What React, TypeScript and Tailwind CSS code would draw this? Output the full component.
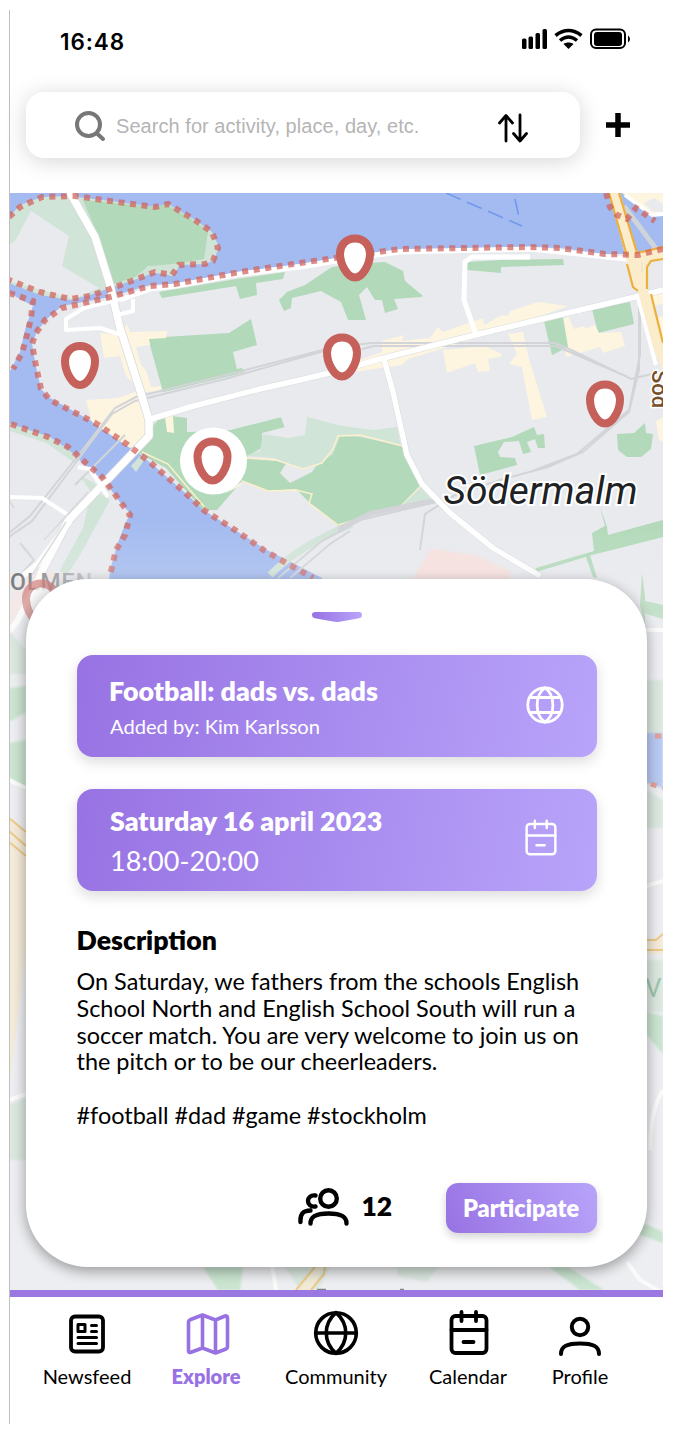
import type { ReactNode } from "react";

const PIN = "M0-19.5C9.2-19.5 15-12.5 15-4.5C15 6.5 7.6 19.5 0 19.5C-7.6 19.5-15 6.5-15-4.5C-15-12.5-9.2-19.5 0-19.5Z";

function Pin({ x, y, opacity = 1 }: { x: number; y: number; opacity?: number }) {
  return (
    <path
      d={PIN}
      transform={`translate(${x} ${y})`}
      fill="#fff"
      stroke="#c5605b"
      strokeWidth="8"
      opacity={opacity}
    />
  );
}

function CityMap() {
  return (
    <svg className="absolute inset-0 h-full w-full" viewBox="10 193 653 1097" preserveAspectRatio="none">
      <defs>
        <linearGradient id="haze" gradientUnits="userSpaceOnUse" x1="0" y1="520" x2="0" y2="650">
          <stop offset="0" stopColor="#f2f2f4" stopOpacity="0" />
          <stop offset="0.45" stopColor="#f2f2f4" stopOpacity="0.2" />
          <stop offset="1" stopColor="#f4f4f5" stopOpacity="0.42" />
        </linearGradient>
        <linearGradient id="labelFade" gradientUnits="userSpaceOnUse" x1="10" y1="0" x2="92" y2="0">
          <stop offset="0" stopColor="#55565a" />
          <stop offset="0.3" stopColor="#77787c" />
          <stop offset="1" stopColor="#c9cace" />
        </linearGradient>
        <filter id="soft"><feGaussianBlur stdDeviation="7" /></filter>
        <filter id="mist"><feGaussianBlur stdDeviation="1.2" /></filter>
      </defs>
      <rect x="9" y="193" width="654" height="1097" fill="#e8eaee" />

      {/* water */}
      <path
        fill="#a3bbf0"
        d="M9 193H663V249L638 254L605 254L560 248L530 247L400 249L355 255L300 264L240 272L172 284L150 285L110 297L62 306L48 318L38 330L32 343L35 362L41 389L50 398L97 424L128 445L152 464L182 490L205 511L235 530L265 549L322 578V640H104L110 570L117 545L122 532L130 513L122 505L105 482L85 465L65 447L45 437L9 424V373L20 352L25 330L33 306L9 293Z"
      />
      {/* north-west island */}
      <path fill="#d1e4d8" d="M9 217L20 205L42 197L68 196L85 198L110 201L155 207L168 204L195 220L212 232L219 247L214 260L205 264L180 265L172 276L155 272L140 278L110 288L90 295L70 300L40 295L9 283Z" />
      <path fill="#e8eaee" d="M9 245L15 241L31 211L69 236L62 266L99 288L74 299L9 281Z" />
      <path fill="#b2d9b9" d="M83 200L155 207L166 204L190 218L208 231L204 259L180 263L147 267L135 277L114 284L96 231Z" />
      <path fill="#d1e4d8" d="M147 266L180 265L174 274L146 273Z" />

      {/* parks */}
      <g fill="#b2d9b9">
        <path d="M159 292L236 279L285 272L283 279L256 283L257 295L240 299L236 286L162 298Z" />
        <path d="M148 338L229 333L251 319L257 345L233 352L238 374L163 392Z" />
        <path d="M279 300L287 292L305 285L332 267L355 264L385 262L403 271L405 281L423 296L421 297L394 299L398 309L385 313L382 300L375 300L367 287L359 295L366 320L348 320L341 302L321 291L292 298L291 308L284 311Z" />
        <path d="M467 262L500 260L563 259L564 265L501 267L501 273L467 270Z" />
        <path d="M592 309L630 302L634 324L598 333Z" />
        <path d="M474 446L512 437L534 427L537 435L544 434L545 448L538 448L535 439L527 442L531 452L523 454L519 441L504 442L498 452L500 457L515 458L517 465L480 475Z" />
        <path d="M617 434L634 433L645 423L646 433L653 434L651 449L641 457L627 457L618 450Z" />
        <path d="M592 533L605 526L600 507L607 527L608 535L663 520V537L612 550L592 555L533 573L536 568L594 551Z" />
        <path d="M590 555L597 578L593 577L586 557Z" />
        <path d="M642 573L645 596L645 625L640 605Z" />
        <path d="M641 600L663 605V619L646 614Z" />
        <path d="M145 435L158 420L172 416L187 418V432L230 430L281 417L285 427L262 433L263 447L245 458L287 462L280 473L290 483L312 472L338 435L374 437L405 446L420 486L400 507L338 526L311 504L296 489L268 491L242 481L217 510L203 510L166 468L138 453Z" />
        <path d="M162 385L242 368L245 372L163 392Z" />
      </g>
      <path fill="#e8eaee" d="M188 416L285 404L308 418L340 435L320 450L288 442L264 447L262 434L285 428L281 417L230 430L187 432Z" />
      <path fill="#d1e4d8" d="M263 434L288 438L305 435L307 417L342 426L374 430L397 427L401 446L360 437L340 436L333 454L318 465L303 470L274 458L245 456L260 451Z" />
      <path fill="#fdf5df" d="M165 417L173 416L174 433L167 432ZM225 494L240 483L268 492L243 484Z" />
      <path fill="none" stroke="#fdf0cc" strokeWidth="1.5" d="M245 458L276 460L303 469L322 463L333 449L338 436L360 435L403 446M420 487L400 507L338 525L309 503L312 494L296 490L268 491L242 481M142 452L168 464L184 483L207 510" />
      <path fill="#d1e4d8" d="M400 507L421 487L435 504Z M131 466L140 456L145 459L136 472Z M80 476L95 483L98 492L110 500L80 555L65 578L60 570L83 528L91 492Z" />
      <path fill="none" stroke="#d1e4d8" strokeWidth="7" d="M270 575Q300 545 352 524M9 427L48 440L78 461" />
      <path fill="#fbded9" filter="url(#mist)" d="M431 549L475 555L510 571V580H412Z" opacity=".8" />
      <path fill="#f6e3df" d="M9 600L34 562L56 574L30 604L9 640Z" opacity=".75" />

      {/* shopping blocks */}
      <g fill="#fdf5df">
        <path d="M100 333L120 335L127 324L130 332L167 331L166 338L149 339L150 345L136 347L141 365L146 370L151 387L161 386L160 391L142 392L126 376L120 356L104 358Z" />
        <path d="M86 400L118 398L140 390L147 420L150 438L130 448L92 422Z" />
        <path d="M382 341L404 335L402 341L430 338L438 327L443 332L483 318L484 325L502 315L508 316L510 311L538 302L568 306L500 331L408 359L402 365L354 372L360 360L382 352Z" />
        <path d="M443 350L485 346L502 354L500 357L488 359L490 371L478 372L475 363L447 373Z" />
        <path d="M508 334L523 332L529 359L547 417L532 420L522 367L509 364L517 354Z" />
        <path d="M562 319L580 312L585 329L595 325L599 333L621 332L625 346L603 353L600 347L566 357Z" />
        <path d="M622 193H663V214L650 214L636 205Z" />
        <path d="M650 296L663 290V304L652 306ZM656 318L663 316V350L657 345ZM656 421L663 417V442L659 440Z" />
      </g>
      <path fill="#e8eaee" d="M568 316L578 312L587 325L574 329ZM644 203L654 198L663 204V212L652 211Z" />
      <path fill="#b2d9b9" d="M544 321L563 317L568 347L552 355Z" />

      {/* railway lines */}
      <g fill="none" stroke="#d2d4d8" strokeWidth="2">
        <path d="M9 537L32 521L74 465L112 414L135 401L225 379L342 346L372 343L555 343L567 348L631 379L652 374M9 533L30 516L77 457L115 408L136 397L230 374L342 345M362 349L374 346L556 346L572 353L628 377" />
        <path d="M639 301V370L629 412L583 452L548 467L500 480L455 495L425 514L420 550M640 310L640 355L629 410L577 454L532 471" />
        <path d="M338 532L360 520L436 502M338 528L370 512L435 499M278 578L322 541L352 525M290 578L330 544L350 531M20 543L34 560L20 575M75 485L125 435" />
      </g>
      <path d="M338 530L370 514L436 500" fill="none" stroke="#d2d4d8" strokeWidth="4" />
      <path d="M624 206L657 250" fill="none" stroke="#cfd3da" strokeWidth="5" />

      {/* roads */}
      <g fill="none" stroke="#d8dade" strokeLinejoin="round">
        <path strokeWidth="9" d="M68 189L82 214L95 237L110 285L120 328L140 390L149 420L149 436L68 521L40 575" />
        <path strokeWidth="6.5" d="M151 419L190 407L260 389L300 380L342 370L380 359L475 335L635 297L663 290M384 359L393 392L407 455L422 484L450 513L493 548L540 576" />
      </g>
      <g fill="none" stroke="#fff" strokeLinejoin="round">
        <path strokeWidth="7.500" d="M68 189L82 214L95 237L110 285L120 328L140 390L149 420L149 436L68 521L40 575" />
        <path strokeWidth="4" d="M122 335L100 328L66 330L66 319L84 308L128 297L150 289L175 286L240 274L300 266L355 257L400 252M117 315L133 311V299" />
        <path strokeWidth="5" d="M120 300L150 289L175 286L240 274L300 267L355 258L400 252L530 249L570 253L635 260M530 257H472L465 262L464 300L476 335" />
        <path strokeWidth="5.500" d="M151 419L190 407L260 389L300 380L342 370L380 359L475 335L635 297L663 290M384 359L393 392L407 455L422 484L450 513L493 548L540 576" />
        <path strokeWidth="4" d="M9 497L42 498L68 515M78 467L90 469L108 497M638 298L656 365M663 214L652 215L625 195" />
        <path strokeWidth="6" d="M40 575L18 620L9 632M70 521L37 565L20 578" />
      </g>
      <path d="M9 500L14 508M88 492L44 540M66 522L32 575" stroke="#d9dadd" fill="none" strokeWidth="1.5" />

      {/* main arterial */}
      <path fill="#fbeccb" d="M609 193H620L637 253L663 248V259L650 261L647 267V289L650 296L663 344V372L654 350L638 292L633 288L627 262L609 193Z" />
      <path fill="none" stroke="#ecb03c" strokeWidth="2.2" d="M609 193L627 256M619 193L637 253L663 247M627 264L633 287L638 291M663 259L651 261L647 267V289M651 294L663 343" />
      <path fill="none" stroke="#e4e0d4" strokeWidth="1" d="M642 262V272" />

      {/* ferry lines */}
      <path d="M446 193L522 226M515 199L520 222" stroke="#7298ec" strokeWidth="1.600" strokeDasharray="16 7" fill="none" />

      {/* district boundary */}
      <g fill="none" stroke="#d26057" strokeOpacity=".72" strokeWidth="6" strokeDasharray="6 5.6">
        <path d="M9 217L20 207L42 197L75 196L110 201L155 207L168 204L195 220L212 232L218 248L213 261L205 264L179 265L172 275L155 272L142 277L110 289L90 296L70 299L40 292L9 280" />
        <path d="M9 293L33 301L31 318L27 335L22 353L13 369" />
        <path d="M663 249L638 255L605 254L560 248L530 247L400 249L355 255L300 263L240 272L175 284L150 286L110 297L62 308L45 320L36 333L32 344L36 366L41 389L50 400L97 424L128 445L152 464L182 490L205 511L235 530L265 551L313 578" />
        <path d="M11 424L48 437L68 447L87 464L103 478L122 504L130 515L125 535L116 550L110 575" />
        <path d="M606 193L610 207L617 215L627 219L636 208L655 221" />
      </g>

      {/* strips visible beside and below the sheet */}
      <g filter="url(#mist)">
        <path fill="#9bd5a8" opacity=".8" d="M9 688L26 686V712L9 722ZM9 743L26 740V790L9 777ZM646 1012L663 1016V1054L646 1034ZM646 1224L663 1232V1243L630 1231ZM203 1267H243L240 1290H218ZM549 1267H568L604 1290H580Z" />
        <path fill="#b9d9c2" opacity=".65" d="M646 680H663V735H646ZM646 790L663 800V828H646ZM9 1105L26 1098V1160H9ZM285 1267L300 1290H318L330 1267ZM397 1267H438L427 1282L397 1276ZM646 960H663V1012H646ZM9 630L26 650V674H9Z" />
        <path fill="#8eacf2" d="M646 733H663V788L646 783Z" />
      </g>
      <g>
        <path fill="#f6e2bb" opacity=".8" d="M9 817L26 833V948L9 1090ZM322 1260L298 1290H312L327 1260ZM646 938H663V954H646Z" />
        <path fill="none" stroke="#e9ac3b" strokeWidth="2" d="M9 818L26 832M9 831L26 846M9 842L26 856M646 940H656L663 934M646 950H663M319 1262L296 1290M326 1260L324 1274L311 1290" />
        <path fill="none" stroke="#fff" strokeWidth="4" d="M646 630H663M646 886L663 881M9 780L26 788M9 1100L26 1094M627 1262L640 1280L663 1293M272 1264L276 1290M663 1090Q650 1110 650 1150" />
        <path fill="none" stroke="#dd6257" strokeWidth="5" strokeDasharray="6 6" d="M655 736H663M651 784L663 788" />
        <path fill="none" stroke="#333" strokeWidth="1.500" d="M317 1289.500H326M400 1289.500H404" />
      </g>

      {/* labels */}
      <text x="443.500" y="504" fontSize="38" fontStyle="italic" fontFamily="Roboto, sans-serif" fill="#202124" stroke="#fff" strokeWidth="4" paintOrder="stroke" textLength="194" lengthAdjust="spacingAndGlyphs">Södermalm</text>
      <text transform="translate(652 370) rotate(90)" fontSize="22" fontWeight="500" fontFamily="Roboto, sans-serif" fill="#76502b" stroke="#fff" strokeWidth="3" paintOrder="stroke">Söd</text>
      <text x="10" y="590" fontSize="23" fontWeight="500" fontFamily="Roboto, sans-serif" fill="url(#labelFade)" textLength="82">OLMEN</text>
      <text x="645" y="997" fontSize="26" fontFamily="Roboto, sans-serif" fill="#5fa576">V</text>

      {/* pins */}
      <circle cx="213.500" cy="461" r="33.500" fill="#fff" />
      <Pin x={355} y={258} />
      <Pin x={342} y={357} />
      <Pin x={80} y={365.5} />
      <Pin x={605} y={404} />
      <Pin x={212.5} y={461} />
      <Pin x={41} y={603} opacity={0.7} />

      <rect x="9" y="520" width="654" height="770" fill="url(#haze)" />
      <rect x="26" y="583" width="621" height="688" rx="62" fill="#000" opacity=".36" filter="url(#soft)" />
    </svg>
  );
}

function Stroke({ className, box, width, children }: { className: string; box: string; width: number; children: ReactNode }) {
  return (
    <svg className={className} viewBox={box} fill="none" stroke="currentColor" strokeWidth={width} strokeLinecap="round" strokeLinejoin="round">
      {children}
    </svg>
  );
}

function CalendarShape() {
  return (
    <>
      <rect x="2" y="6" width="35" height="37" rx="4" />
      <path d="M2 20H37M12 2V11M26.500 2V11M14 32H24" />
    </>
  );
}

function StatusBar() {
  return (
    <div className="flex h-[82px] items-start justify-between pr-[33px] pl-[50px]">
      <span className="mt-[17px] font-[Inter,sans-serif] text-[22.500px] leading-[30px] font-semibold tracking-[0.9px]">16:48</span>
      <svg className="mt-[17px] h-[24px] w-[110px]" viewBox="521 27 110 24">
        <g fill="#000">
          <rect x="523" y="38.500" width="4.500" height="10.500" rx="1.500" />
          <rect x="529.500" y="36.500" width="4.500" height="12.500" rx="1.500" />
          <rect x="536.500" y="33" width="4.500" height="16" rx="1.500" />
          <rect x="543.500" y="29" width="4.500" height="20" rx="1.500" />
          <path d="M564.500 44C567 42 572 42 574.500 44L569.500 49Z" />
          <rect x="595" y="32" width="28" height="14" rx="3" />
          <path d="M629 35.500Q631 37 631 39T629 42.500Z" />
        </g>
        <g fill="none" stroke="#000">
          <path strokeWidth="3.500" d="M556.500 35.500Q569.500 25.500 582.500 35.500M561 40.500Q569.500 33.500 578 40.500" />
          <rect x="592" y="29.500" width="34" height="18.500" rx="5" strokeWidth="2" />
        </g>
      </svg>
    </div>
  );
}

function SearchBar() {
  return (
    <div className="flex h-[66px] items-center pl-[16px]">
      <div className="flex h-full w-[554px] items-center rounded-[18px] bg-white pl-[49px] shadow-[0_3px_22px_rgba(0,0,0,0.17)]">
        <Stroke className="mt-[3px] h-[32px] w-[32px] shrink-0 text-[#777]" box="0 0 32 32" width={4}>
          <circle cx="13.500" cy="13.500" r="11.500" />
          <path d="M22 22.500L28 28" />
        </Stroke>
        <span className="mt-[2px] ml-[9px] w-[370px] font-['Liberation_Sans',sans-serif] text-[20px] tracking-[0.05px] whitespace-nowrap text-[#b5b5b5]">
          Search for activity, place, day, etc.
        </span>
        <Stroke className="mt-[5px] ml-[11px] h-[30px] w-[32px] shrink-0" box="0 0 32 30" width={2.8}>
          <path d="M9 28V3M2.500 10L9 2.500L15.500 10M23 2V27.500M16.500 20.500L23 28L29.500 20.500" />
        </Stroke>
      </div>
      <svg className="ml-[25.500px] h-[24px] w-[24px]" viewBox="0 0 24 24">
        <path d="M12 0V24M0 12H24" stroke="#000" strokeWidth="5.500" />
      </svg>
    </div>
  );
}

function InfoCard({ title, detail, large, icon }: { title: string; detail: string; large?: boolean; icon: ReactNode }) {
  return (
    <div className="flex h-[102px] items-start justify-between rounded-[16px] bg-linear-100 from-[#9872e3] to-[#b8a4fa] pl-[33.500px] text-white shadow-[0_5px_14px_rgba(0,0,0,0.14)]">
      <div className="pt-[20px]">
        <h2 className={large ? "-mt-[4px] text-[26.850px] leading-[32px] font-extrabold whitespace-nowrap" : "-ml-[1px] text-[26.800px] leading-[32px] font-extrabold whitespace-nowrap"}>{title}</h2>
        <p className={large ? "mt-[8px] text-[27px] leading-[32px]" : "mt-[7px] text-[20.150px] leading-[24px]"}>{detail}</p>
      </div>
      {icon}
    </div>
  );
}

function NavItem({ label, active, children }: { label: string; active?: boolean; children: ReactNode }) {
  return (
    <a className={active ? "flex flex-col items-center text-[#9872e3]" : "flex flex-col items-center text-black"}>
      <span className="flex h-[47px] items-end">{children}</span>
      <span className={active ? "mt-[8px] text-[20px] leading-[24px] font-extrabold" : "mt-[8px] text-[20px] leading-[24px]"}>{label}</span>
    </a>
  );
}

export default function App() {
  return (
    <div className="h-[1440px] w-[678px] overflow-hidden bg-white pt-[10px] pl-[9px] font-[Lato,sans-serif] text-black">
      <div className="flex h-[1414px] w-[654px] flex-col border-l border-[#bfbfc2]">
        <header className="h-[183px]">
          <StatusBar />
          <SearchBar />
        </header>

        <main className="relative h-[1097px] overflow-hidden">
          <CityMap />
          <section className="relative mt-[386px] ml-[16px] flex h-[688px] w-[621px] flex-col rounded-[62px] bg-white pr-[50.500px] pl-[50.500px]">
            <svg className="mt-[32px] h-[13px] w-[52px] self-center" viewBox="0 0 52 13">
              <defs>
                <linearGradient id="handle"><stop stopColor="#9872e3" /><stop offset="1" stopColor="#b8a4fa" /></linearGradient>
              </defs>
              <path fill="url(#handle)" d="M4 1H48Q51 1 51 4T47 7.500L27 11Q26 11.200 25 11L5 7.500Q1 7 1 4T4 1Z" />
            </svg>
            <div className="mt-[30.500px] flex flex-col gap-[32.500px]">
              <InfoCard
                title="Football: dads vs. dads"
                detail="Added by: Kim Karlsson"
                icon={
                  <Stroke className="mt-[31.500px] mr-[33px] h-[38px] w-[38px]" box="0 0 38 38" width={2.8}>
                    <circle cx="19" cy="19" r="17.200" />
                    <path d="M4 11.500H34M4 26.500H34M19 1.800C8.500 9 8.500 29 19 36.200M19 1.800C29.500 9 29.500 29 19 36.200" />
                  </Stroke>
                }
              />
              <InfoCard
                large
                title="Saturday 16 april 2023"
                detail="18:00-20:00"
                icon={
                  <Stroke className="mt-[28.500px] mr-[40px] h-[39px] w-[32px]" box="0 0 39 45" width={3}>
                    <CalendarShape />
                  </Stroke>
                }
              />
            </div>
            <h3 className="mt-[33px] text-[26.700px] leading-[32px] font-extrabold">Description</h3>
            <p className="mt-[12px] text-[23.450px] leading-[26.800px] whitespace-nowrap">
              On Saturday, we fathers from the schools English
              <br />
              School North and English School South will run a
              <br />
              soccer match. You are very welcome to join us on
              <br />
              the pitch or to be our cheerleaders.
              <br />
              <br />
              #football #dad #game #stockholm
            </p>
            <div className="mt-[54px] flex h-[50px] items-center justify-end">
              <Stroke className="-mt-[3px] h-[39px] w-[51px]" box="0 0 51 39" width={4.4}>
                <circle cx="30.500" cy="11.500" r="8.300" />
                <path d="M12.500 36.500C12.500 29.500 18 26.500 30.500 26.500S48.500 29.500 48.500 36.500M17.500 8.500C7.500 7 7.500 21 17.500 19.500M2.500 35C2 27 5 23.500 12.500 23.500" />
              </Stroke>
              <span className="-mt-[3px] ml-[12.500px] w-[84px] text-[26.500px] leading-[32px] font-extrabold">12</span>
              <button className="h-[50px] w-[151px] rounded-[12px] bg-linear-65 from-[#9872e3] to-[#b8a4fa] text-[23.500px] leading-[48px] font-extrabold text-white shadow-[0_4px_8px_rgba(0,0,0,0.18)]">
                Participate
              </button>
            </div>
          </section>
        </main>

        <nav className="grid flex-1 grid-cols-[119px_119px_141px_123px_101px] items-start border-t-[7px] border-[#9b77e2] bg-white pt-[12px] pl-[17.500px]">
          <NavItem label="Newsfeed">
            <Stroke className="mb-[2px] h-[40px] w-[36px]" box="0 0 36 40" width={3.8}>
              <rect x="2" y="2.500" width="32" height="35" rx="4" />
              <path strokeWidth="3" d="M9 10.500H16V17.500H9ZM22.500 11.500H27.500M22.500 17.500H27.500M9 23.500H27.500M9 29.500H27.500" />
            </Stroke>
          </NavItem>
          <NavItem label="Explore" active>
            <Stroke className="ml-[3px] h-[44px] w-[44px]" box="0 0 44 44" width={3.6}>
              <path d="M2.500 10Q2.500 8.500 4 7.800L16.500 3L29.500 8L39 4Q41.500 3.500 41.500 6V35Q41.500 36.500 40 37L29.500 41L16.500 36L5 40.300Q2.500 41 2.500 38.500ZM16.500 3V36M29.500 8V41" />
            </Stroke>
          </NavItem>
          <NavItem label="Community">
            <Stroke className="h-[46px] w-[46px]" box="0 0 46 46" width={3.6}>
              <circle cx="23" cy="23" r="20.300" />
              <path d="M2.700 23H43.300M23 2.700C10 14 10 32 23 43.300M23 2.700C36 14 36 32 23 43.300" />
            </Stroke>
          </NavItem>
          <NavItem label="Calendar">
            <Stroke className="ml-[1px] h-[47px] w-[40px]" box="-0.500 0 40 45" width={3.8}>
              <CalendarShape />
            </Stroke>
          </NavItem>
          <NavItem label="Profile">
            <Stroke className="h-[40px] w-[44px]" box="0 0 44 40" width={4}>
              <circle cx="22" cy="11" r="8.200" />
              <path d="M3 38C3 30 9.500 27.500 22 27.500S41 30 41 38" />
            </Stroke>
          </NavItem>
        </nav>
      </div>
    </div>
  );
}
